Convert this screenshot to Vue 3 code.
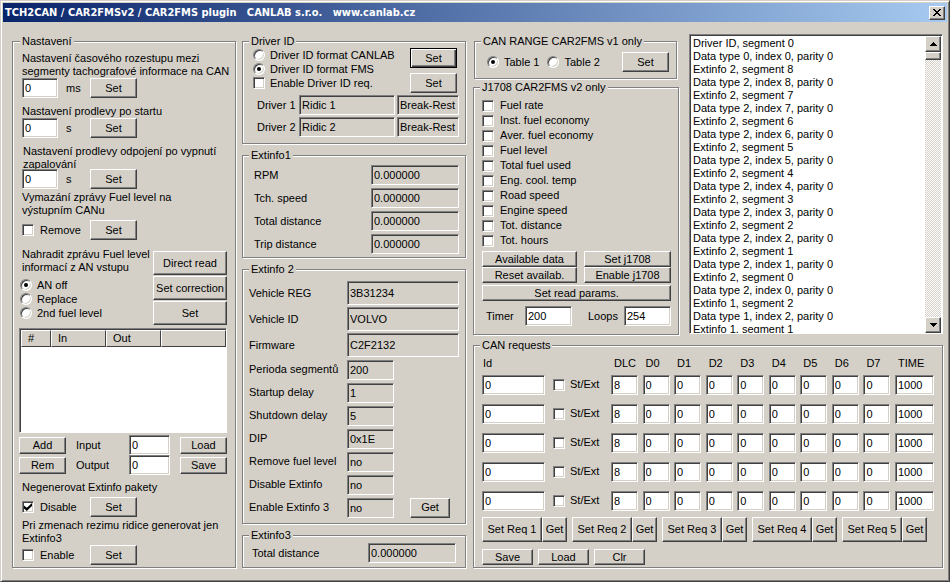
<script setup>
import { reactive, ref } from 'vue';

const settings = reactive({
  segmentDelay: '0',
  startDelay: '0',
  shutdownDelay: '0',
  remove: false,
  anMode: 'off',
  input: '0',
  output: '0',
  disableExtinfo: true,
  enableExtinfo3: false,
});

const anModes = [
  { value: 'off', label: 'AN off' },
  { value: 'replace', label: 'Replace' },
  { value: 'second', label: '2nd fuel level' },
];

const driverFormat = ref('fms');
const driverReq = ref(false);
const drivers = [
  { label: 'Driver 1', name: 'Ridic 1', status: 'Break-Rest' },
  { label: 'Driver 2', name: 'Ridic 2', status: 'Break-Rest' },
];

const extinfo1 = ['RPM', 'Tch. speed', 'Total distance', 'Trip distance'];

const extinfo2 = [
  { label: 'Vehicle REG', value: '3B31234', wide: true },
  { label: 'Vehicle ID', value: 'VOLVO', wide: true },
  { label: 'Firmware', value: 'C2F2132', wide: true },
  { label: 'Perioda segmentů', value: '200' },
  { label: 'Startup delay', value: '1' },
  { label: 'Shutdown delay', value: '5' },
  { label: 'DIP', value: '0x1E' },
  { label: 'Remove fuel level', value: 'no' },
  { label: 'Disable Extinfo', value: 'no' },
  { label: 'Enable Extinfo 3', value: 'no', get: true },
];

const canRange = ref('1');

const j1708 = reactive([
  'Fuel rate',
  'Inst. fuel economy',
  'Aver. fuel economy',
  'Fuel level',
  'Total fuel used',
  'Eng. cool. temp',
  'Road speed',
  'Engine speed',
  'Tot. distance',
  'Tot. hours',
].map((label) => ({ label, checked: false })));
const timer = ref('200');
const loops = ref('254');

const log = ['Driver ID, segment 0', 'Data type 0, index 0, parity 0'];
for (let i = 8; i >= 0; i--) {
  log.push(`Extinfo 2, segment ${i}`, `Data type 2, index ${i}, parity 0`);
}
log.push('Extinfo 1, segment 2', 'Data type 1, index 2, parity 0', 'Extinfo 1, segment 1');

const dataCols = ['DLC', 'D0', 'D1', 'D2', 'D3', 'D4', 'D5', 'D6', 'D7'];
const requests = reactive([1, 2, 3, 4, 5].map((n) => ({
  n,
  id: '0',
  ext: false,
  data: ['8', '0', '0', '0', '0', '0', '0', '0', '0'],
  time: '1000',
})));
</script>

<template>
  <div class="window">
    <header class="titlebar">
      <h1>TCH2CAN / CAR2FMSv2 / CAR2FMS plugin &nbsp; CANLAB s.r.o. &nbsp; www.canlab.cz</h1>
      <button class="close" aria-label="Close">
        <svg width="8" height="7" viewBox="0 0 8 7" shape-rendering="crispEdges">
          <path d="M0 0h2v1h1v1h2v-1h1v-1h2v1h-1v1h-1v1h-1v1h1v1h1v1h1v1h-2v-1h-1v-1h-2v1h-1v1h-2v-1h1v-1h1v-1h1v-1h-1v-1h-1v-1h-1z" />
        </svg>
      </button>
    </header>

    <main class="panels">
      <fieldset class="settings">
        <legend>Nastavení</legend>

        <label class="caption" for="seg-delay">Nastavení časového rozestupu mezi<br>segmenty tachografové informace na CAN</label>
        <div class="line">
          <span class="value"><input id="seg-delay" v-model="settings.segmentDelay" type="text"> ms</span>
          <button>Set</button>
        </div>

        <label class="caption spaced" for="start-delay">Nastavení prodlevy po startu</label>
        <div class="line">
          <span class="value"><input id="start-delay" v-model="settings.startDelay" type="text"> s</span>
          <button>Set</button>
        </div>

        <label class="caption spaced clipped" for="stop-delay">Nastavení prodlevy odpojení po vypnutí<br>zapalování</label>
        <div class="line">
          <span class="value"><input id="stop-delay" v-model="settings.shutdownDelay" type="text"> s</span>
          <button>Set</button>
        </div>

        <p class="caption tight">Vymazání zprávy Fuel level na<br>výstupním CANu</p>
        <div class="line check-line">
          <label class="option"><input v-model="settings.remove" type="checkbox"> Remove</label>
          <button>Set</button>
        </div>

        <div class="analog">
          <div>
            <p>Nahradit zprávu Fuel level<br>informací z AN vstupu</p>
            <div class="modes">
              <label v-for="mode in anModes" :key="mode.value" class="option">
                <input v-model="settings.anMode" type="radio" name="an-mode" :value="mode.value">
                {{ mode.label }}
              </label>
            </div>
          </div>
          <div class="analog-buttons">
            <button>Direct read</button>
            <button>Set correction</button>
            <button>Set</button>
          </div>
        </div>

        <div class="list">
          <table>
            <thead>
              <tr><th>#</th><th>In</th><th>Out</th><th></th></tr>
            </thead>
          </table>
        </div>

        <div class="list-tools">
          <button>Add</button>
          <label for="list-input">Input</label>
          <input id="list-input" v-model="settings.input" type="text">
          <button>Load</button>
          <button>Rem</button>
          <label for="list-output">Output</label>
          <input id="list-output" v-model="settings.output" type="text">
          <button>Save</button>
        </div>

        <p class="caption packets">Negenerovat Extinfo pakety</p>
        <div class="line check-line">
          <label class="option"><input v-model="settings.disableExtinfo" type="checkbox"> Disable</label>
          <button>Set</button>
        </div>

        <p class="caption tight">Pri zmenach rezimu ridice generovat jen<br>Extinfo3</p>
        <div class="line">
          <label class="option"><input v-model="settings.enableExtinfo3" type="checkbox"> Enable</label>
          <button>Set</button>
        </div>
      </fieldset>

      <div class="column">
        <fieldset class="driver">
          <legend>Driver ID</legend>
          <div class="driver-top">
            <div class="modes">
              <label class="option"><input v-model="driverFormat" type="radio" name="driver" value="canlab"> Driver ID format CANLAB</label>
              <label class="option"><input v-model="driverFormat" type="radio" name="driver" value="fms"> Driver ID format FMS</label>
              <label class="option"><input v-model="driverReq" type="checkbox"> Enable Driver ID req.</label>
            </div>
            <div class="driver-buttons">
              <button class="default">Set</button>
              <button>Set</button>
            </div>
          </div>
          <div v-for="(driver, i) in drivers" :key="driver.label" class="driver-row">
            <label :for="'driver-' + i">{{ driver.label }}</label>
            <input :id="'driver-' + i" type="text" :value="driver.name" readonly>
            <input type="text" :value="driver.status" :aria-label="driver.label + ' status'" readonly>
          </div>
        </fieldset>

        <fieldset class="extinfo1">
          <legend>Extinfo1</legend>
          <div v-for="(label, i) in extinfo1" :key="label" class="readout">
            <label :for="'ext1-' + i">{{ label }}</label>
            <input :id="'ext1-' + i" type="text" value="0.000000" readonly>
          </div>
        </fieldset>

        <fieldset class="extinfo2">
          <legend>Extinfo 2</legend>
          <div v-for="(item, i) in extinfo2" :key="item.label" class="info-row" :class="{ wide: item.wide }">
            <label :for="'ext2-' + i">{{ item.label }}</label>
            <input :id="'ext2-' + i" type="text" :value="item.value" readonly>
            <button v-if="item.get">Get</button>
          </div>
        </fieldset>

        <fieldset class="extinfo3">
          <legend>Extinfo3</legend>
          <div class="readout">
            <label for="ext3">Total distance</label>
            <input id="ext3" type="text" value="0.000000" readonly>
          </div>
        </fieldset>
      </div>

      <div class="right">
        <div class="upper">
          <div class="car2fms">
            <fieldset class="range">
              <legend>CAN RANGE CAR2FMS v1 only</legend>
              <label class="option"><input v-model="canRange" type="radio" name="range" value="1"> Table 1</label>
              <label class="option"><input v-model="canRange" type="radio" name="range" value="2"> Table 2</label>
              <button>Set</button>
            </fieldset>

            <fieldset class="j1708">
              <legend>J1708 CAR2FMS v2 only</legend>
              <label v-for="item in j1708" :key="item.label" class="option">
                <input v-model="item.checked" type="checkbox">
                {{ item.label }}
              </label>
              <div class="j-buttons">
                <button>Available data</button>
                <button>Set j1708</button>
                <button>Reset availab.</button>
                <button>Enable j1708</button>
              </div>
              <button class="params">Set read params.</button>
              <div class="j-values">
                <label for="timer">Timer</label>
                <input id="timer" v-model="timer" type="text">
                <label for="loops">Loops</label>
                <input id="loops" v-model="loops" type="text">
              </div>
            </fieldset>
          </div>

          <div class="log">
            <ul>
              <li v-for="entry in log" :key="entry">{{ entry }}</li>
            </ul>
            <div class="scrollbar">
              <button aria-label="Scroll up">
                <svg width="7" height="4" viewBox="0 0 7 4" shape-rendering="crispEdges"><path d="M3 0h1v1h1v1h1v1h1v1h-7v-1h1v-1h1v-1h1z" /></svg>
              </button>
              <div class="thumb"></div>
              <div class="track"></div>
              <button aria-label="Scroll down">
                <svg width="7" height="4" viewBox="0 0 7 4" shape-rendering="crispEdges"><path d="M0 0h7v1h-1v1h-1v1h-1v1h-1v-1h-1v-1h-1v-1h-1z" /></svg>
              </button>
            </div>
          </div>
        </div>

        <fieldset class="requests">
          <legend>CAN requests</legend>
          <table>
            <thead>
              <tr>
                <th class="col-id">Id</th>
                <th class="col-ext"></th>
                <th v-for="col in dataCols" :key="col">{{ col }}</th>
                <th class="col-time">TIME</th>
              </tr>
            </thead>
            <tbody>
              <tr v-for="req in requests" :key="req.n">
                <td><input v-model="req.id" class="id" type="text" :aria-label="'Id ' + req.n"></td>
                <td><label class="option"><input v-model="req.ext" type="checkbox"> St/Ext</label></td>
                <td v-for="(col, i) in dataCols" :key="col">
                  <input v-model="req.data[i]" class="byte" type="text" :aria-label="col + ' ' + req.n">
                </td>
                <td><input v-model="req.time" class="time" type="text" :aria-label="'TIME ' + req.n"></td>
              </tr>
            </tbody>
          </table>
          <div class="req-buttons">
            <div v-for="req in requests" :key="req.n" class="pair">
              <button>Set Req {{ req.n }}</button>
              <button>Get</button>
            </div>
          </div>
          <div class="file-buttons">
            <button>Save</button>
            <button>Load</button>
            <button>Clr</button>
          </div>
        </fieldset>
      </div>
    </main>
  </div>
</template>

<style>
body {
  margin: 0;
  background: #d4d0c8;
}
</style>

<style scoped>
* {
  box-sizing: border-box;
}

.window {
  min-height: 100vh;
  padding: 2px;
  border: 1px solid;
  border-color: #d4d0c8 #404040 #404040 #d4d0c8;
  box-shadow: inset 1px 1px #fff, inset -1px -1px #808080;
  background: #d4d0c8;
  color: #000;
  font: 11px/13px "Liberation Sans", Arial, sans-serif;
  white-space: nowrap;
}

.titlebar {
  display: flex;
  align-items: center;
  justify-content: space-between;
  height: 19px;
  padding: 0 2px;
  background: linear-gradient(to right, #0a246a, #a6caf0);
}

h1 {
  margin: 0;
  color: #fff;
  font: bold 11px/19px "DejaVu Sans Condensed", "DejaVu Sans", sans-serif;
}

p {
  margin: 0;
}

button,
input {
  margin: 0;
  color: inherit;
  font: inherit;
}

button {
  display: flex;
  align-items: center;
  justify-content: center;
  width: 47px;
  height: 20px;
  padding: 0;
  border: 1px solid;
  border-color: #fff #404040 #404040 #fff;
  border-radius: 0;
  box-shadow: inset -1px -1px #808080;
  background: #d4d0c8;
}

button.default {
  border-color: #000;
  box-shadow: inset 1px 1px #fff, inset -1px -1px #404040, inset -2px -2px #808080;
}

.close {
  width: 16px;
  height: 14px;
}

input[type="text"] {
  width: 100%;
  min-width: 0;
  height: 20px;
  padding: 0 2px;
  border: 1px solid;
  border-color: #808080 #fff #fff #808080;
  border-radius: 0;
  box-shadow: inset 1px 1px #404040, inset -1px -1px #d4d0c8;
  background: #fff;
}

input[type="text"][readonly] {
  background: #d4d0c8;
}

.option {
  display: flex;
  align-items: center;
  gap: 5px;
  height: 14px;
}

input[type="checkbox"],
input[type="radio"] {
  display: grid;
  place-items: center;
  flex: none;
  width: 12px;
  height: 12px;
  border: 1px solid;
  border-color: #808080 #fff #fff #808080;
  box-shadow: inset 1px 1px #404040, inset -1px -1px #d4d0c8;
  background: #fff;
  appearance: none;
}

input[type="radio"] {
  border-radius: 50%;
}

input[type="radio"]:checked::before {
  content: "";
  width: 4px;
  height: 4px;
  border-radius: 50%;
  background: #000;
}

input[type="checkbox"]:checked::before {
  content: "";
  width: 8px;
  height: 8px;
  background: #000;
  clip-path: polygon(0 30%, 35% 60%, 100% 0, 100% 38%, 35% 100%, 0 68%);
}

fieldset {
  min-width: 0;
  margin: 0;
  padding: 0;
  border: 1px solid #808080;
  box-shadow: 1px 1px #fff, inset 1px 1px #fff;
}

legend {
  height: 13px;
  padding: 0 2px;
  background: #d4d0c8;
}

.panels {
  display: grid;
  grid-template-columns: 224fr 224fr 471fr;
  gap: 6px;
  padding: 13px 4px 10px 9px;
}

.column {
  display: flex;
  flex-direction: column;
  gap: 5px;
}

.settings {
  padding: 0 8px 1px 6px;
}

.settings legend {
  margin-left: 1px;
}

.caption {
  display: block;
  padding: 4px 0 0 3px;
}

.caption.spaced {
  padding-top: 7px;
}

.caption.tight {
  padding-top: 2px;
}

.caption.clipped {
  height: 31px;
  padding-left: 4px;
  overflow: hidden;
}

.caption.packets {
  padding-top: 6px;
}

.line {
  display: grid;
  grid-template-columns: 68px 47px;
  align-items: center;
  padding-left: 3px;
}

.check-line {
  margin-top: 3px;
}

.value {
  display: flex;
  align-items: center;
  gap: 8px;
}

.value input[type="text"] {
  width: 36px;
}

.line .option {
  gap: 6px;
}

.analog {
  display: flex;
  justify-content: space-between;
  padding: 8px 0 0 3px;
}

.analog .modes {
  margin: 4px 0 0 -2px;
}

.analog-buttons {
  display: flex;
  flex-direction: column;
  gap: 1px;
  padding-top: 3px;
}

.analog-buttons button {
  width: 74px;
  height: 24px;
}

.list {
  height: 105px;
  margin-top: 3px;
  border: 1px solid;
  border-color: #808080 #fff #fff #808080;
  box-shadow: inset 1px 1px #404040;
  background: #fff;
}

.list table {
  width: 100%;
  padding: 1px 0 0 1px;
  border-spacing: 0;
  table-layout: fixed;
}

.list th {
  width: 55px;
  height: 17px;
  padding: 0 6px;
  border: 1px solid;
  border-color: #fff #404040 #404040 #fff;
  background: #d4d0c8;
  font-weight: normal;
  text-align: left;
}

.list th:first-child {
  width: 30px;
}

.list th:last-child {
  width: auto;
}

.list-tools {
  display: grid;
  grid-template-columns: 47px 1fr 41px 47px;
  align-items: center;
  column-gap: 10px;
  margin-top: 2px;
}

.list-tools button {
  height: 17px;
}

.driver {
  padding: 0 6px 6px 10px;
}

.driver legend {
  margin-left: -4px;
}

.driver-top {
  display: flex;
  justify-content: space-between;
  margin-bottom: 2px;
}

.driver-buttons {
  display: grid;
  gap: 5px;
  padding-right: 2px;
}

.driver-row {
  display: grid;
  grid-template-columns: 40px 1fr 62px;
  align-items: center;
  column-gap: 2px;
  padding-left: 4px;
}

.driver-row + .driver-row {
  margin-top: 2px;
}

.readout {
  display: flex;
  align-items: center;
  justify-content: space-between;
}

.readout input[type="text"] {
  width: 88px;
}

.extinfo1 {
  padding: 3px 6px 3px 11px;
}

.extinfo1 legend {
  margin-left: -5px;
}

.readout + .readout {
  margin-top: 3px;
}

.extinfo2 {
  padding: 5px 6px;
}

.info-row {
  display: grid;
  grid-template-columns: 98px 47px 1fr;
  align-items: center;
  height: 21px;
}

.info-row + .info-row {
  margin-top: 2px;
}

.info-row.wide {
  grid-template-columns: 98px 1fr;
  height: 24px;
}

.info-row.wide input[type="text"] {
  height: 24px;
}

.info-row button {
  justify-self: end;
  width: 40px;
  margin-right: 9px;
}

.extinfo3 {
  flex: 1;
  padding: 1px 9px 4px 9px;
}

.extinfo3 legend {
  margin-left: -3px;
}

.right {
  display: flex;
  flex-direction: column;
  gap: 4px;
  min-width: 0;
  padding-left: 1px;
}

.upper {
  display: grid;
  grid-template-columns: 206fr 254fr;
  gap: 10px;
}

.car2fms {
  display: flex;
  flex-direction: column;
  gap: 2px;
}

.range {
  margin: 0 2px 0 1px;
  padding: 4px 7px 6px 12px;
}

.range legend {
  margin-left: -6px;
}

.range .option {
  float: left;
  height: 20px;
  margin-right: 8px;
}

.range button {
  float: right;
}

.j1708 {
  padding: 4px 7px 8px 8px;
}

.j1708 legend,
.requests legend {
  margin-left: -2px;
}

.j1708 .option {
  height: 15px;
  gap: 6px;
}

.j-buttons {
  display: grid;
  grid-template-columns: 95fr 87fr;
  column-gap: 7px;
  margin-top: 3px;
}

.j-buttons button,
.params {
  width: 100%;
  height: 16px;
}

.params {
  margin-top: 2px;
}

.j-values {
  display: grid;
  grid-template-columns: 39px 47px 1fr 47px;
  align-items: center;
  margin-top: 5px;
  padding-left: 4px;
}

.j-values label + input + label {
  padding-left: 16px;
}

.log {
  display: flex;
  height: 300px;
  margin-top: -1px;
  border: 1px solid;
  border-color: #808080 #fff #fff #808080;
  box-shadow: inset 1px 1px #404040;
  background: #fff;
}

.log ul {
  flex: 1;
  margin: 0;
  padding: 2px 0 0 3px;
  overflow: hidden;
  list-style: none;
}

.scrollbar {
  display: flex;
  flex-direction: column;
  width: 16px;
  margin: 1px 1px 0 0;
}

.scrollbar button,
.thumb {
  flex: none;
  width: 16px;
  height: 16px;
}

.thumb {
  height: 8px;
  border: 1px solid;
  border-color: #fff #404040 #404040 #fff;
  box-shadow: inset -1px -1px #808080;
  background: #d4d0c8;
}

.track {
  flex: 1;
  background: repeating-conic-gradient(#fff 0 25%, #d4d0c8 0 50%) 0 0 / 2px 2px;
}

.requests {
  padding: 0 8px 2px 8px;
}

.requests table {
  width: 100%;
  border-spacing: 0;
  table-layout: fixed;
}

.requests th {
  height: 18px;
  padding: 4px 0 0 3px;
  font-weight: normal;
  line-height: 14px;
  text-align: left;
}

.requests th.col-id {
  width: 71px;
  padding-left: 1px;
}

.requests th.col-ext {
  width: 58px;
}

.requests th.col-time {
  width: 39px;
}

.requests td {
  height: 29px;
  padding: 0;
}

.requests .id {
  width: 63px;
}

.requests .byte {
  width: 27px;
}

.req-buttons {
  display: flex;
  gap: 5px;
  margin-top: 2px;
}

.pair {
  display: grid;
  grid-template-columns: 60px 25px;
}

.pair button {
  width: 100%;
  height: 25px;
}

.file-buttons {
  display: flex;
  gap: 5px;
  margin-top: 7px;
}

.file-buttons button {
  width: 51px;
  height: 16px;
}
</style>
